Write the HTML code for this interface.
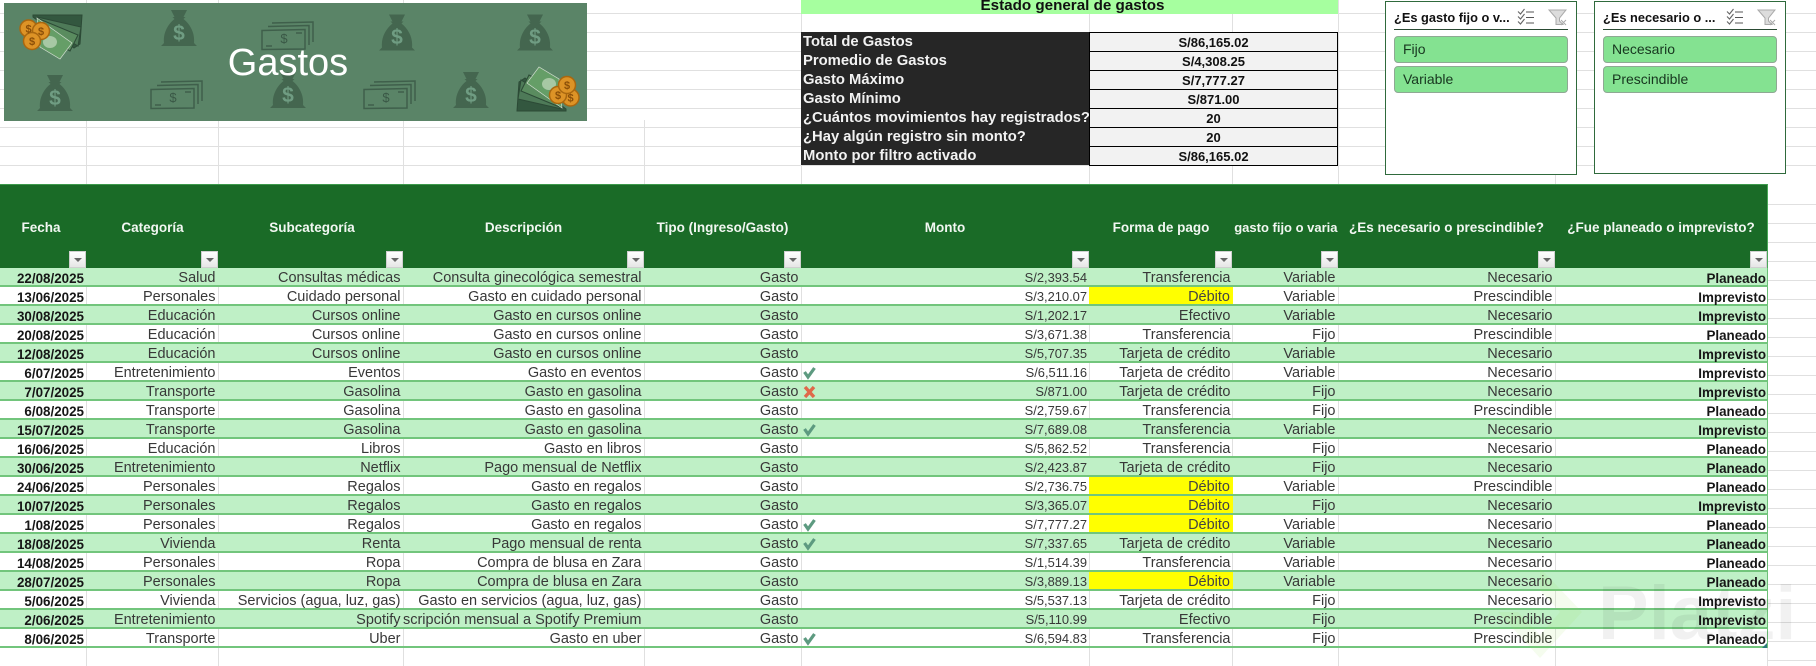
<!DOCTYPE html>
<html lang="es"><head><meta charset="utf-8"><title>Gastos</title>
<style>
*{box-sizing:border-box;margin:0;padding:0}
html,body{width:1816px;height:666px;overflow:hidden;background:#fff;font-family:"Liberation Sans",sans-serif}
.abs{position:absolute}
#gt{position:absolute;left:0;top:0;width:1816px;height:185px;background:repeating-linear-gradient(#0000 0 18px,#e0e0e0 18px 19px);background-position:0 -5px}
#gr{position:absolute;left:1767px;top:184px;width:49px;height:482px;background:repeating-linear-gradient(#0000 0 18px,#e0e0e0 18px 19px);background-position:0 2px}
.v{position:absolute;width:1px;background:#e0e0e0}
#hd{position:absolute;left:0;top:184px;width:1768px;height:84px;background:#1a6b27;border-top:1px solid #3d9a4c;border-right:1px solid #4aa858}
.h{position:absolute;top:32px;height:20px;display:flex;justify-content:center;align-items:center;overflow:hidden;white-space:nowrap;color:#f2f7f2;font-weight:bold;font-size:13.5px}
.f{position:absolute;top:66px;width:17px;height:17px;background:linear-gradient(#fff,#e6e6e6);border:1px solid #d0d0d0}
.f:after{content:"";position:absolute;left:4px;top:6px;border-left:4px solid transparent;border-right:4px solid transparent;border-top:4px solid #666}
#tb{position:absolute;left:0;top:268px;width:1768px}
.r{display:grid;grid-template-columns:87px 131px 185px 241px 157px 288px 144px 105px 217px 212px;height:19px;border-bottom:2px solid #72c57c;border-right:1px solid #6cc077}
.r.g{background:#bff0c6}
.r>*{display:flex;justify-content:flex-end;align-items:center;overflow:hidden;white-space:nowrap;padding-right:2.500px;font-size:14.500px;color:#383838;font-weight:normal;height:19px;font-style:normal}
.r>b{font-size:13.4px;font-weight:bold;color:#161616;padding-top:2px;padding-right:3px}
.r>b:last-child{padding-right:1px}
.r>u{text-decoration:none;font-size:12.9px;padding-right:2px}
.r>s{text-decoration:none;background:#ff0;padding-top:2px;padding-right:3px;color:#444;height:17px}
.st{position:absolute;left:801px;width:537px;height:19px}
.st .l{position:absolute;left:0;top:0;width:288px;height:19px;background:#262626;color:#f2f2f2;font-weight:bold;font-size:14.8px;line-height:20px;padding-left:2px;overflow:hidden;white-space:nowrap}
.st .w{position:absolute;left:288px;top:0;width:249px;height:20px;background:#f2f2f2;border:1px solid #000;color:#111;font-weight:bold;font-size:13px;line-height:20px;text-align:center}
.sl{position:absolute;top:1px;width:192px;background:#fff;border:1.5px solid #2f6a3c}
.sl .t{position:absolute;left:8px;top:7px;font-size:12.8px;font-weight:bold;color:#111;white-space:nowrap;line-height:17px}
.sl .ln{position:absolute;left:8px;top:27px;width:174px;height:1px;background:#2a4a33}
.sl .b{position:absolute;left:8px;width:174px;height:27px;border:1px solid #8ea993;border-radius:4px;background:#84e291;color:#17361f;font-size:14px;line-height:24px;padding-left:8px}
</style></head><body>
<div id="gt"></div><div id="gr"></div>
<div class="v" style="left:86px;top:0;height:184px"></div><div class="v" style="left:218px;top:0;height:184px"></div><div class="v" style="left:403px;top:0;height:184px"></div><div class="v" style="left:644px;top:120px;height:64px"></div><div class="v" style="left:801px;top:0;height:184px"></div><div class="v" style="left:1089px;top:14px;height:170px"></div><div class="v" style="left:1232px;top:14px;height:170px"></div><div class="v" style="left:1338px;top:0;height:184px"></div><div class="v" style="left:1555px;top:170px;height:14px"></div>
<div class="v" style="left:86px;top:268px;height:398px"></div><div class="v" style="left:218px;top:268px;height:398px"></div><div class="v" style="left:403px;top:268px;height:398px"></div><div class="v" style="left:644px;top:268px;height:398px"></div><div class="v" style="left:801px;top:268px;height:398px"></div><div class="v" style="left:1089px;top:268px;height:398px"></div><div class="v" style="left:1232px;top:268px;height:398px"></div><div class="v" style="left:1338px;top:268px;height:398px"></div><div class="v" style="left:1555px;top:268px;height:398px"></div><div class="v" style="left:1767px;top:648px;height:18px"></div>

<svg class="abs" style="left:4px;top:3px" width="583" height="118" viewBox="4 3 583 118">
<rect x="4" y="3" width="583" height="118" fill="#5a8467"/>
<g fill="#44664f" id="bags">
<path transform="translate(161,10)" d="M10 0H26L22.500 7H24.500L22.500 9C30 15 34 24 33 33L36 36H0L3 33C2 24 6 15 13.500 9L11.500 7H13.500Z"/>
<path transform="translate(379,14.500)" d="M10 0H26L22.500 7H24.500L22.500 9C30 15 34 24 33 33L36 36H0L3 33C2 24 6 15 13.500 9L11.500 7H13.500Z"/>
<path transform="translate(517,14.500)" d="M10 0H26L22.500 7H24.500L22.500 9C30 15 34 24 33 33L36 36H0L3 33C2 24 6 15 13.500 9L11.500 7H13.500Z"/>
<path transform="translate(37,75)" d="M10 0H26L22.500 7H24.500L22.500 9C30 15 34 24 33 33L36 36H0L3 33C2 24 6 15 13.500 9L11.500 7H13.500Z"/>
<path transform="translate(270,72)" d="M10 0H26L22.500 7H24.500L22.500 9C30 15 34 24 33 33L36 36H0L3 33C2 24 6 15 13.500 9L11.500 7H13.500Z"/>
<path transform="translate(453,72)" d="M10 0H26L22.500 7H24.500L22.500 9C30 15 34 24 33 33L36 36H0L3 33C2 24 6 15 13.500 9L11.500 7H13.500Z"/>
</g>
<g fill="#6f9c82" font-family="Liberation Sans" font-weight="bold" font-size="21" text-anchor="middle">
<text x="179" y="40">$</text><text x="397" y="44">$</text><text x="535" y="44">$</text><text x="55" y="105">$</text><text x="288" y="102">$</text><text x="471" y="102">$</text>
</g>
<g fill="none" stroke="#3f5f4b" stroke-width="1.500">
<g transform="translate(262,22)"><path d="M0 8.500L43 7.500V27L0 27.500Z"/><path d="M6 4.500L47 3.500V23M10 1L51 0V20"/><path d="M4 24H10M34 11H40"/></g>
<g transform="translate(151,81)"><path d="M0 8.500L43 7.500V27L0 27.500Z"/><path d="M6 4.500L47 3.500V23M10 1L51 0V20"/><path d="M4 24H10M34 11H40"/></g>
<g transform="translate(364,81)"><path d="M0 8.500L43 7.500V27L0 27.500Z"/><path d="M6 4.500L47 3.500V23M10 1L51 0V20"/><path d="M4 24H10M34 11H40"/></g>
</g>
<g fill="#3a5846" font-family="Liberation Sans" font-size="13" text-anchor="middle"><text x="284" y="43">$</text><text x="173" y="102">$</text><text x="386" y="102">$</text></g>
<g transform="translate(18,14)">
<path d="M15 1H64L62 30L56 34L15 3Z" fill="#33573f" stroke="#2c4a36"/>
<path d="M19 3L63 13L60 32L34 16Z" fill="#4e7a58" stroke="#2c4a36"/>
<path d="M19 4L60 21L52 37L24 20Z" fill="#5a8c5f" stroke="#2c4a36"/>
<path d="M19 4L54 29L42 45L22 33Z" fill="#659e67" stroke="#cfdccd" stroke-width=".7"/>
<ellipse cx="32" cy="28" rx="7" ry="6" fill="#a7c8a4"/>
<g fill="#dd9326" stroke="#a9670f" stroke-width="1.500"><circle cx="10.500" cy="14.500" r="8.500"/><circle cx="23" cy="17" r="8.500"/><circle cx="14" cy="27" r="8.500"/></g>
</g>
<g transform="translate(517,66) rotate(180 32 23)">
<path d="M15 1H64L62 30L56 34L15 3Z" fill="#33573f" stroke="#2c4a36"/>
<path d="M19 3L63 13L60 32L34 16Z" fill="#4e7a58" stroke="#2c4a36"/>
<path d="M19 4L60 21L52 37L24 20Z" fill="#5a8c5f" stroke="#2c4a36"/>
<path d="M19 4L54 29L42 45L22 33Z" fill="#659e67" stroke="#cfdccd" stroke-width=".7"/>
<ellipse cx="32" cy="28" rx="7" ry="6" fill="#a7c8a4"/>
<g fill="#dd9326" stroke="#a9670f" stroke-width="1.500"><circle cx="10.500" cy="14.500" r="8.500"/><circle cx="23" cy="17" r="8.500"/><circle cx="14" cy="27" r="8.500"/></g>
</g>
<g fill="#8b4f08" font-family="Liberation Sans" font-weight="bold" font-size="11" text-anchor="middle">
<text x="28.500" y="32.500">$</text><text x="41" y="35">$</text><text x="32" y="45">$</text>
<text x="570.500" y="101.500">$</text><text x="558" y="99">$</text><text x="567" y="89">$</text>
</g>
<text x="288" y="75" fill="#fff" font-family="Liberation Sans" font-size="38" text-anchor="middle">Gastos</text>
</svg>

<div class="abs" style="left:801px;top:0;width:537px;height:14px;background:#a6ff9f;overflow:hidden;text-align:center;color:#111;font-weight:bold;font-size:15.200px;line-height:12px;padding-left:6px">Estado general de gastos</div>
<div class="st" style="top:32px"><div class="l">Total de Gastos</div><div class="w">S/86,165.02</div></div>
<div class="st" style="top:51px"><div class="l">Promedio de Gastos</div><div class="w">S/4,308.25</div></div>
<div class="st" style="top:70px"><div class="l">Gasto Máximo</div><div class="w">S/7,777.27</div></div>
<div class="st" style="top:89px"><div class="l">Gasto Mínimo</div><div class="w">S/871.00</div></div>
<div class="st" style="top:108px"><div class="l">¿Cuántos movimientos hay registrados?</div><div class="w">20</div></div>
<div class="st" style="top:127px"><div class="l">¿Hay algún registro sin monto?</div><div class="w">20</div></div>
<div class="st" style="top:146px"><div class="l">Monto por filtro activado</div><div class="w">S/86,165.02</div></div>

<div class="sl" style="left:1385px;height:174px"><div class="t">¿Es gasto fijo o v...</div>
<svg class="abs" style="left:131px;top:6px" width="50" height="18" fill="none"><path d="M1 3.500L3.500 6L7.500 1M1 8.500L3.500 11L7.500 6M1 13.500L3.500 16L7.500 11" stroke="#666" stroke-width="1.100"/><path d="M9 4H17M9 9.500H17M9 15H17" stroke="#555" stroke-width="1.100"/><path d="M32 2H49L42.500 10V13L46 16.500H39V10Z" fill="#dcdcdc" stroke="#aaa"/><path d="M44 12L49 17M49 12L44 17" stroke="#aaa"/></svg>
<div class="ln"></div><div class="b" style="top:34px">Fijo</div><div class="b" style="top:64px">Variable</div></div>
<div class="sl" style="left:1594px;height:173px"><div class="t">¿Es necesario o ...</div>
<svg class="abs" style="left:131px;top:6px" width="50" height="18" fill="none"><path d="M1 3.500L3.500 6L7.500 1M1 8.500L3.500 11L7.500 6M1 13.500L3.500 16L7.500 11" stroke="#666" stroke-width="1.100"/><path d="M9 4H17M9 9.500H17M9 15H17" stroke="#555" stroke-width="1.100"/><path d="M32 2H49L42.500 10V13L46 16.500H39V10Z" fill="#dcdcdc" stroke="#aaa"/><path d="M44 12L49 17M49 12L44 17" stroke="#aaa"/></svg>
<div class="ln"></div><div class="b" style="top:34px">Necesario</div><div class="b" style="top:64px">Prescindible</div></div>

<div id="hd">
<div class="h" style="left:0;width:82px">Fecha</div><div class="h" style="left:87px;width:131px">Categoría</div><div class="h" style="left:218px;width:188px">Subcategoría</div><div class="h" style="left:403px;width:241px">Descripción</div><div class="h" style="left:644px;width:157px">Tipo (Ingreso/Gasto)</div><div class="h" style="left:801px;width:288px">Monto</div><div class="h" style="left:1089px;width:144px">Forma de pago</div><div class="h" style="left:1233px;width:105px;font-size:13px">¿Es gasto fijo o variable?</div><div class="h" style="left:1338px;width:217px">¿Es necesario o prescindible?</div><div class="h" style="left:1555px;width:212px">¿Fue planeado o imprevisto?</div>
<div class="f" style="left:69px"></div><div class="f" style="left:201px"></div><div class="f" style="left:386px"></div><div class="f" style="left:627px"></div><div class="f" style="left:784px"></div><div class="f" style="left:1072px"></div><div class="f" style="left:1215px"></div><div class="f" style="left:1321px"></div><div class="f" style="left:1538px"></div><div class="f" style="left:1750px"></div>
</div>

<div id="tb">
<div class="r g"><b>22/08/2025</b><span>Salud</span><span>Consultas médicas</span><span>Consulta ginecológica semestral</span><span>Gasto</span><u>S/2,393.54</u><span>Transferencia</span><span>Variable</span><span>Necesario</span><b>Planeado</b></div>
<div class="r"><b>13/06/2025</b><span>Personales</span><span>Cuidado personal</span><span>Gasto en cuidado personal</span><span>Gasto</span><u>S/3,210.07</u><s>Débito</s><span>Variable</span><span>Prescindible</span><b>Imprevisto</b></div>
<div class="r g"><b>30/08/2025</b><span>Educación</span><span>Cursos online</span><span>Gasto en cursos online</span><span>Gasto</span><u>S/1,202.17</u><span>Efectivo</span><span>Variable</span><span>Necesario</span><b>Imprevisto</b></div>
<div class="r"><b>20/08/2025</b><span>Educación</span><span>Cursos online</span><span>Gasto en cursos online</span><span>Gasto</span><u>S/3,671.38</u><span>Transferencia</span><span>Fijo</span><span>Prescindible</span><b>Planeado</b></div>
<div class="r g"><b>12/08/2025</b><span>Educación</span><span>Cursos online</span><span>Gasto en cursos online</span><span>Gasto</span><u>S/5,707.35</u><span>Tarjeta de crédito</span><span>Variable</span><span>Necesario</span><b>Imprevisto</b></div>
<div class="r"><b>6/07/2025</b><span>Entretenimiento</span><span>Eventos</span><span>Gasto en eventos</span><span>Gasto</span><u>S/6,511.16</u><span>Tarjeta de crédito</span><span>Variable</span><span>Necesario</span><b>Imprevisto</b></div>
<div class="r g"><b>7/07/2025</b><span>Transporte</span><span>Gasolina</span><span>Gasto en gasolina</span><span>Gasto</span><u>S/871.00</u><span>Tarjeta de crédito</span><span>Fijo</span><span>Necesario</span><b>Imprevisto</b></div>
<div class="r"><b>6/08/2025</b><span>Transporte</span><span>Gasolina</span><span>Gasto en gasolina</span><span>Gasto</span><u>S/2,759.67</u><span>Transferencia</span><span>Fijo</span><span>Prescindible</span><b>Planeado</b></div>
<div class="r g"><b>15/07/2025</b><span>Transporte</span><span>Gasolina</span><span>Gasto en gasolina</span><span>Gasto</span><u>S/7,689.08</u><span>Transferencia</span><span>Variable</span><span>Necesario</span><b>Imprevisto</b></div>
<div class="r"><b>16/06/2025</b><span>Educación</span><span>Libros</span><span>Gasto en libros</span><span>Gasto</span><u>S/5,862.52</u><span>Transferencia</span><span>Fijo</span><span>Necesario</span><b>Planeado</b></div>
<div class="r g"><b>30/06/2025</b><span>Entretenimiento</span><span>Netflix</span><span>Pago mensual de Netflix</span><span>Gasto</span><u>S/2,423.87</u><span>Tarjeta de crédito</span><span>Fijo</span><span>Necesario</span><b>Planeado</b></div>
<div class="r"><b>24/06/2025</b><span>Personales</span><span>Regalos</span><span>Gasto en regalos</span><span>Gasto</span><u>S/2,736.75</u><s>Débito</s><span>Variable</span><span>Prescindible</span><b>Planeado</b></div>
<div class="r g"><b>10/07/2025</b><span>Personales</span><span>Regalos</span><span>Gasto en regalos</span><span>Gasto</span><u>S/3,365.07</u><s>Débito</s><span>Fijo</span><span>Necesario</span><b>Imprevisto</b></div>
<div class="r"><b>1/08/2025</b><span>Personales</span><span>Regalos</span><span>Gasto en regalos</span><span>Gasto</span><u>S/7,777.27</u><s>Débito</s><span>Variable</span><span>Necesario</span><b>Planeado</b></div>
<div class="r g"><b>18/08/2025</b><span>Vivienda</span><span>Renta</span><span>Pago mensual de renta</span><span>Gasto</span><u>S/7,337.65</u><span>Tarjeta de crédito</span><span>Variable</span><span>Necesario</span><b>Planeado</b></div>
<div class="r"><b>14/08/2025</b><span>Personales</span><span>Ropa</span><span>Compra de blusa en Zara</span><span>Gasto</span><u>S/1,514.39</u><span>Transferencia</span><span>Variable</span><span>Necesario</span><b>Planeado</b></div>
<div class="r g"><b>28/07/2025</b><span>Personales</span><span>Ropa</span><span>Compra de blusa en Zara</span><span>Gasto</span><u>S/3,889.13</u><s>Débito</s><span>Variable</span><span>Necesario</span><b>Planeado</b></div>
<div class="r"><b>5/06/2025</b><span>Vivienda</span><span>Servicios (agua, luz, gas)</span><span>Gasto en servicios (agua, luz, gas)</span><span>Gasto</span><u>S/5,537.13</u><span>Tarjeta de crédito</span><span>Fijo</span><span>Necesario</span><b>Imprevisto</b></div>
<div class="r g"><b>2/06/2025</b><span>Entretenimiento</span><span>Spotify</span><span>Suscripción mensual a Spotify Premium</span><span>Gasto</span><u>S/5,110.99</u><span>Efectivo</span><span>Fijo</span><span>Prescindible</span><b>Imprevisto</b></div>
<div class="r"><b>8/06/2025</b><span>Transporte</span><span>Uber</span><span>Gasto en uber</span><span>Gasto</span><u>S/6,594.83</u><span>Transferencia</span><span>Fijo</span><span>Prescindible</span><b>Planeado</b></div>
</div>

<svg class="abs" style="left:803px;top:268px" width="14" height="380" fill="none">
<g stroke="#5d9a80" stroke-width="3.200">
<path d="M1.500 104L5 109L11.500 100"/>
<path d="M1.500 161L5 166L11.500 157"/>
<path d="M1.500 256L5 261L11.500 252"/>
<path d="M1.500 275L5 280L11.500 271"/>
<path d="M1.500 370L5 375L11.500 366"/>
</g>
<path d="M2 119L11 129M11 119L2 129" stroke="#e0684a" stroke-width="3.400"/>
</svg>

<svg class="abs" style="left:1490px;top:560px;pointer-events:none" width="326" height="106">
<path d="M50 8L92 52L50 98L8 52L28 52L50 75L70 52L50 30Z" fill="#9adf5a" opacity=".1"/>
<text x="108" y="79" font-family="Liberation Sans" font-weight="bold" font-size="76" fill="#000" opacity=".05">Platzi</text>
</svg>
<svg class="abs" style="left:1762px;top:643px" width="6" height="6"><path d="M5 0V5H0Z" fill="#2c7a7a"/></svg>
</body></html>
